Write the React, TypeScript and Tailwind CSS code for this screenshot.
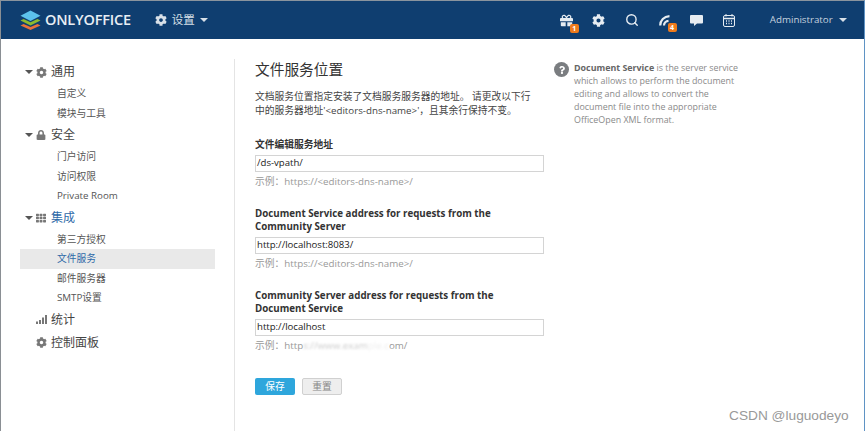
import { Search } from "lucide-react";
import { FaCog, FaLock, FaTh, FaGift, FaQuestion } from "react-icons/fa";

const font = { fontFamily: '"Open Sans", "Noto Sans CJK SC", sans-serif' };

function Caret({ className }: { className: string }) {
  return <span className={`h-0 w-0 border-x-[4px] border-t-[4px] border-x-transparent ${className}`} />;
}

function Badge({ n }: { n: string }) {
  return (
    <span className="absolute -bottom-[6px] -right-[6px] flex h-[9px] w-[9px] items-center justify-center rounded-[2px] bg-[#ef7b1c] text-[7px] leading-none font-bold text-white">
      {n}
    </span>
  );
}

function Logo() {
  return (
    <svg width="21" height="20" viewBox="0 0 21 20">
      <path d="M10.5 20 L0.5 15.4 L3.6 13.9 L10.5 17 L17.4 13.9 L20.5 15.4Z" fill="#e8703a" />
      <path d="M10.5 15.4 L0.5 10.6 L3.6 9.1 L10.5 12.3 L17.4 9.1 L20.5 10.6Z" fill="#8dbb2e" />
      <path d="M10.5 11 L0.5 5.8 L10.5 0.5 L20.5 5.8Z" fill="#5cc2ec" />
    </svg>
  );
}

function FeedIcon() {
  return (
    <svg width="12" height="11" viewBox="0 0 12 11" fill="none" stroke="currentColor" strokeWidth="2.2">
      <path d="M1.2 10.5 C1.2 5.5 5 1.5 10.5 1.2" />
      <path d="M5 10.5 C5 8 7 6 9.5 5.8" />
    </svg>
  );
}

function ChatIcon() {
  return (
    <svg width="13" height="11" viewBox="0 0 13 11" fill="currentColor">
      <path d="M1 0 H12 A1 1 0 0 1 13 1 V7.5 A1 1 0 0 1 12 8.5 H7 L4 11 V8.5 H1 A1 1 0 0 1 0 7.5 V1 A1 1 0 0 1 1 0Z" />
    </svg>
  );
}

function CalendarIcon() {
  return (
    <svg width="12" height="13" viewBox="0 0 12 13" fill="none" stroke="currentColor">
      <rect x="0.5" y="1.5" width="11" height="11" rx="1.5" />
      <path d="M0.5 4.5 H11.5" strokeWidth="1.5" />
      <path d="M3 0 V2.5 M9 0 V2.5" />
      <path d="M3 7 H4 M5.5 7 H6.5 M8 7 H9 M3 9.5 H4 M5.5 9.5 H6.5 M8 9.5 H9" strokeWidth="1.3" />
    </svg>
  );
}

function BarsIcon() {
  return (
    <svg width="11" height="9" viewBox="0 0 11 9" fill="currentColor">
      <rect x="0" y="6.5" width="2" height="2.5" />
      <rect x="3" y="5" width="2" height="4" />
      <rect x="6" y="2.5" width="2" height="6.5" />
      <rect x="9" y="0" width="2" height="9" />
    </svg>
  );
}

function Group({ icon, label, active, caret = true }: { icon: React.ReactNode; label: string; active?: boolean; caret?: boolean }) {
  return (
    <div className="flex h-[23px] items-center pt-[1px] pl-[5px]">
      <span className="w-[10px]">{caret && <Caret className="block w-0 border-t-[#555]" />}</span>
      <span className="flex w-[12px] justify-center text-[#777]">{icon}</span>
      <span className={`ml-[4px] text-[12px] ${active ? "text-[#2f6aa8]" : "text-[#444]"}`}>{label}</span>
    </div>
  );
}

function Item({ label, active }: { label: string; active?: boolean }) {
  return (
    <div className={`flex h-[19.5px] items-center pt-[1.5px] pl-[37px] text-[9.75px] ${active ? "bg-[#e9e9e9] text-[#2f6aa8]" : "text-[#555]"}`}>
      {label}
    </div>
  );
}

function Field({ label, value, hint, blur }: { label: React.ReactNode; value: string; hint?: string; blur?: boolean }) {
  return (
    <div className="flex flex-col">
      <div className="text-[9.75px] leading-[13px] font-bold text-[#333]">{label}</div>
      <div className="mt-[4px] flex h-[17px] w-[289px] items-center border border-[#d4d4d4] pl-[1px] text-[9.6px] text-[#222]">{value}</div>
      <div className="mt-[3px] h-[14px] text-[9.75px] leading-[14px] text-[#999]">
        示例：{blur ? (
          <>
            http<span className="text-[#ccc] blur-[1px]">s://www.exam</span>
            <span className="text-[#eee] blur-[1px]">ple.c</span>om/
          </>
        ) : (
          hint
        )}
      </div>
    </div>
  );
}

export default function App() {
  return (
    <div style={font} className="flex h-[431px] w-[865px] flex-col overflow-hidden border-t border-l border-r border-t-[#8a949e] border-l-[#8a8f94] border-r-[#5f93c4] bg-white">
      <header className="flex h-[38px] shrink-0 items-center bg-[#0f3e70] text-white">
        <div className="ml-[19px]"><Logo /></div>
        <span className="ml-[4px] text-[14.5px] font-semibold tracking-[-0.2px] text-[#e8eef4]">ONLYOFFICE</span>
        <FaCog className="ml-[24px] text-[12px] text-[#d8e0e8]" />
        <span className="ml-[5px] text-[11.5px] text-[#d8e0e8]">设置</span>
        <Caret className="ml-[5px] border-t-[#d8e0e8]" />
        <div className="ml-[352px] flex items-center gap-[19.6px] text-[#e6ecf2]">
          <span className="relative flex"><FaGift className="text-[13px]" /><Badge n="1" /></span>
          <FaCog className="text-[13px]" />
          <Search size={14} strokeWidth={2.4} />
          <span className="relative flex"><FeedIcon /><Badge n="4" /></span>
          <ChatIcon />
          <CalendarIcon />
        </div>
        <span className="ml-[35px] text-[9.75px] text-[#c5d2df]">Administrator</span>
        <Caret className="ml-[6px] border-t-[#d8e0e8]" />
      </header>
      <main className="flex flex-1 pt-[20px]">
        <nav className="ml-[19px] w-[195px] pt-[1px]">
          <Group icon={<FaCog className="text-[11px]" />} label="通用" />
          <div className="mt-[1px]">
            <Item label="自定义" />
            <Item label="模块与工具" />
          </div>
          <Group icon={<FaLock className="text-[10px]" />} label="安全" />
          <div className="mt-[1px]">
            <Item label="门户访问" />
            <Item label="访问权限" />
            <Item label="Private Room" />
          </div>
          <Group icon={<FaTh className="text-[10px]" />} label="集成" active />
          <div className="mt-[1px]">
            <Item label="第三方授权" />
            <Item label="文件服务" active />
            <Item label="邮件服务器" />
            <Item label="SMTP设置" />
          </div>
          <Group icon={<BarsIcon />} label="统计" caret={false} />
          <Group icon={<FaCog className="text-[11px]" />} label="控制面板" caret={false} />
        </nav>
        <section className="ml-[19px] w-[320px] self-stretch border-l border-[#e4e4e4] pl-[20px]">
          <h1 className="text-[14.7px] leading-[21px] text-[#333]">文件服务位置</h1>
          <p className="mt-[10px] w-[285px] text-[9.75px] leading-[14px] text-[#444]">
            文档服务位置指定安装了文档服务服务器的地址。 请更改以下行中的服务器地址'&lt;editors-dns-name&gt;'，且其余行保持不变。
          </p>
          <div className="mt-[20px] flex flex-col gap-[18px]">
            <Field label="文件编辑服务地址" value="/ds-vpath/" hint="https://<editors-dns-name>/" />
            <Field label={<>Document Service address for requests from the<br />Community Server</>} value="http://localhost:8083/" hint="https://<editors-dns-name>/" />
            <Field label={<>Community Server address for requests from the<br />Document Service</>} value="http://localhost" blur />
          </div>
          <div className="mt-[25px] flex gap-[7px]">
            <button className="h-[17px] w-[40px] rounded-[2px] bg-[#2ea6dc] text-[9.75px] leading-none text-white">保存</button>
            <button className="h-[17px] w-[40px] rounded-[2px] border border-[#d0d0d0] bg-[#eeeeee] text-[9.75px] leading-none text-[#888]">重置</button>
          </div>
        </section>
        <aside className="flex pt-[2px]">
          <span className="mt-[1px] flex h-[15px] w-[15px] shrink-0 items-center justify-center rounded-full bg-[#7a7d80] text-white"><FaQuestion className="text-[8px]" /></span>
          <p className="ml-[5px] w-[172px] text-[8.9px] leading-[13px] text-[#8a8a8a]">
            <b className="font-bold text-[#666]">Document Service</b> is the server service which allows to perform the document editing and allows to convert the document file into the appropriate OfficeOpen XML format.
          </p>
        </aside>
      </main>
      <div className="absolute left-[729px] top-[406px] text-[13.7px] text-[#999]" style={{ fontFamily: '"Liberation Sans", sans-serif' }}>CSDN @luguodeyo</div>
    </div>
  );
}
